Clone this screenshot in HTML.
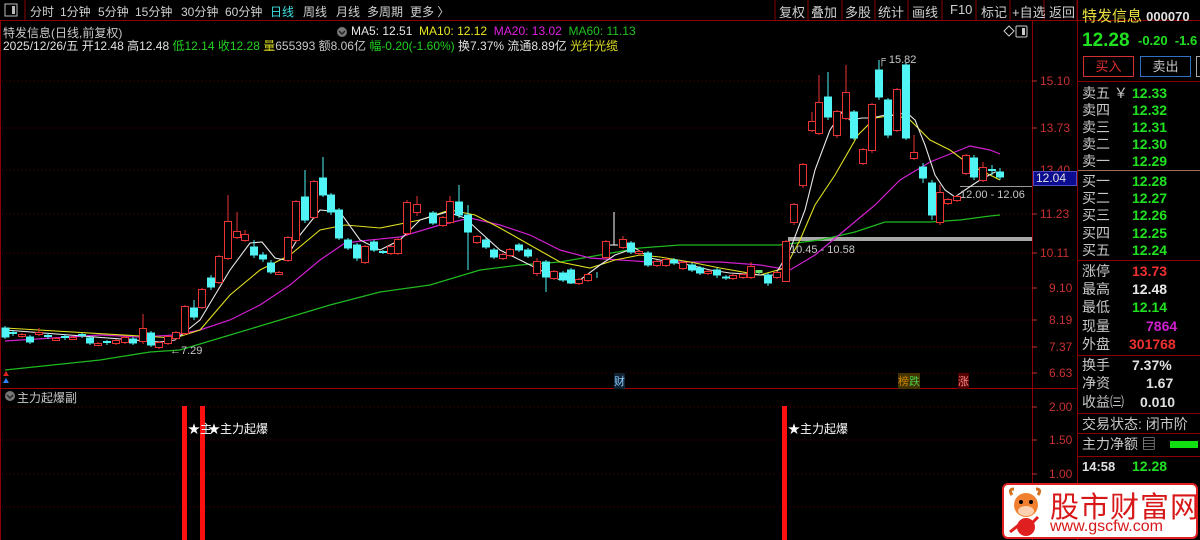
<!DOCTYPE html>
<html><head><meta charset="utf-8">
<style>
*{margin:0;padding:0;box-sizing:border-box}
body{width:1200px;height:540px;background:#000;overflow:hidden;position:relative;font-family:"Liberation Sans","Noto Sans CJK SC",sans-serif;font-size:12px;color:#c8c8c8}
.a{position:absolute;white-space:nowrap}
.m{position:absolute;top:3px;font-size:12px;color:#d0d0d0;white-space:nowrap}
.rp{position:absolute;left:1078px;top:0;width:122px;height:540px}
.row{position:absolute;left:4px;width:118px;font-size:14px;height:18px;line-height:18px}
.row b{position:absolute;left:50px;font-weight:bold;font-family:"Liberation Sans",sans-serif;font-size:14px}
.hl{position:absolute;left:0;width:122px;height:1px;background:#8b0000}
</style></head><body>
<svg class="a" style="left:0;top:0" width="1200" height="540">
<g stroke="#8b0000">
<line x1="25" y1="0" x2="25" y2="20"/>
<line x1="775" y1="0" x2="775" y2="20"/><line x1="808" y1="0" x2="808" y2="20"/><line x1="842" y1="0" x2="842" y2="20"/><line x1="875" y1="0" x2="875" y2="20"/><line x1="908" y1="0" x2="908" y2="20"/><line x1="942" y1="0" x2="942" y2="20"/><line x1="976" y1="0" x2="976" y2="20"/><line x1="1010" y1="0" x2="1010" y2="20"/><line x1="1044" y1="0" x2="1044" y2="20"/><line x1="1077" y1="0" x2="1077" y2="20"/>
<line x1="0" y1="20.5" x2="1200" y2="20.5"/>
<line x1="1032.5" y1="20" x2="1032.5" y2="540"/>
<line x1="1077.5" y1="0" x2="1077.5" y2="540"/>
<line x1="0.5" y1="20" x2="0.5" y2="540"/>
<line x1="0" y1="388.5" x2="1077" y2="388.5" stroke="#a00000"/>
</g>
<rect x="5" y="4" width="12" height="12" fill="none" stroke="#bbb"/><rect x="12" y="6" width="3" height="8" fill="#bbb"/>
<g stroke="#5a0000" stroke-dasharray="1,3">
<line x1="2" y1="81" x2="1032" y2="81"/><line x1="2" y1="128" x2="1032" y2="128"/><line x1="2" y1="170" x2="1032" y2="170"/><line x1="2" y1="214" x2="1032" y2="214"/><line x1="2" y1="253" x2="1032" y2="253"/><line x1="2" y1="288" x2="1032" y2="288"/><line x1="2" y1="320" x2="1032" y2="320"/><line x1="2" y1="347" x2="1032" y2="347"/><line x1="2" y1="373" x2="1032" y2="373"/>
<line x1="2" y1="407" x2="1032" y2="407"/><line x1="2" y1="440" x2="1032" y2="440"/><line x1="2" y1="474" x2="1032" y2="474"/><line x1="2" y1="507" x2="1032" y2="507"/>
</g>
<g stroke="#c03030">
<line x1="1032" y1="81" x2="1037" y2="81"/><line x1="1032" y1="128" x2="1037" y2="128"/><line x1="1032" y1="214" x2="1037" y2="214"/><line x1="1032" y1="253" x2="1037" y2="253"/><line x1="1032" y1="288" x2="1037" y2="288"/><line x1="1032" y1="320" x2="1037" y2="320"/><line x1="1032" y1="347" x2="1037" y2="347"/><line x1="1032" y1="373" x2="1037" y2="373"/><line x1="1032" y1="407" x2="1037" y2="407"/><line x1="1032" y1="440" x2="1037" y2="440"/><line x1="1032" y1="474" x2="1037" y2="474"/>
</g>
<rect x="788" y="237" width="244" height="4" fill="#a8a8a8"/>
<line x1="960" y1="186.5" x2="1032" y2="186.5" stroke="#999"/>
<polyline fill="none" stroke="#1fb81f" stroke-width="1.3" points="5,370 100,360 150,352 180,350 230,335 280,320 330,305 380,292 430,285 480,270 520,265 560,262 600,255 640,248 680,245 740,245 780,245 820,240 855,232 885,222 930,222 960,220 990,216 1000,215"/>
<polyline fill="none" stroke="#d020d0" stroke-width="1.2" points="5,341 100,335 140,337 175,335 200,330 230,320 260,305 290,285 320,260 345,243 370,240 400,237 440,225 470,218 500,225 530,235 560,250 590,258 620,260 650,262 680,262 720,262 760,265 790,270 815,255 845,230 875,205 900,180 930,162 960,150 970,146 990,150 1000,154"/>
<polyline fill="none" stroke="#e0e020" stroke-width="1.1" points="5,328 140,336 175,338 200,330 230,295 260,270 290,255 320,230 345,225 380,228 420,220 450,210 475,215 500,228 530,245 560,262 590,268 615,260 640,255 660,257 690,262 720,268 760,275 785,268 800,240 815,205 835,175 858,135 875,118 895,115 910,120 930,140 950,150 970,165 990,175 1000,180"/>
<polyline fill="none" stroke="#e8e8e8" stroke-width="1.1" points="5,330 160,342 175,340 200,320 230,270 250,243 262,242 275,258 285,260 300,235 320,210 340,212 360,240 380,250 400,240 420,220 447,212 465,218 480,232 500,250 520,260 540,270 560,280 580,280 600,265 615,255 635,248 650,258 670,262 690,265 710,270 730,273 760,275 775,275 790,250 805,210 815,170 830,130 842,112 850,120 862,118 872,118 885,115 898,115 906,112 915,120 925,145 935,175 945,190 955,197 965,190 980,180 995,172 1000,172"/>
<g fill="none" stroke="#e83434" stroke-width="1">
<path d="M22,333v5M39,328v8M56,337v4M73,336v4M98,342v4M116,339v6M125,336v8M143,314v30M159,341v8M168,335v10M176,331v9M185,305v30M202,288v21M219,255v29M228,195v65M237,212v27M245,230v12M279,271v4M288,236v26M296,200v42M314,180v39M365,245v19M391,245v10M398,238v17M407,200v36M417,196v20M443,216v11M450,196v28M477,235v9M503,253v7M510,248v9M537,258v18M554,270v10M579,278v7M588,273v9M606,240v19M623,236v13M639,250v5M657,260v7M666,258v9M683,261v9M708,270v5M733,274v6M743,273v6M751,262v17M777,271v8M786,240v42M794,203v22M803,163v25M812,112v20M819,75v60M837,110v28M846,65v55M863,148v17M872,103v50M897,88v44M914,135v25M940,185v40M948,198v7M957,195v7M966,154v21M983,162v20"/>
<g fill="#000">
<rect x="18.5" y="334.5" width="7" height="2"/><rect x="35.5" y="332.5" width="7" height="2"/><rect x="52.5" y="338.5" width="7" height="2"/><rect x="69.5" y="337.5" width="7" height="2"/><rect x="94.5" y="343.5" width="7" height="2"/><rect x="112.5" y="340.5" width="7" height="3"/><rect x="121.5" y="337.5" width="7" height="5"/><rect x="139.5" y="328.5" width="7" height="13"/><rect x="155.5" y="342.5" width="7" height="5"/><rect x="164.5" y="336.5" width="7" height="7"/><rect x="172.5" y="332.5" width="7" height="6"/><rect x="181.5" y="306.5" width="7" height="27"/><rect x="198.5" y="289.5" width="7" height="18"/><rect x="215.5" y="256.5" width="7" height="26"/><rect x="224.5" y="221.5" width="7" height="37"/><rect x="233.5" y="231.5" width="7" height="6"/><rect x="241.5" y="234.5" width="7" height="6"/><rect x="275.5" y="272.5" width="7" height="2"/><rect x="284.5" y="237.5" width="7" height="23"/><rect x="292.5" y="201.5" width="7" height="39"/><rect x="310.5" y="181.5" width="7" height="36"/><rect x="361.5" y="246.5" width="7" height="16"/><rect x="387.5" y="246.5" width="7" height="7"/><rect x="394.5" y="239.5" width="7" height="14"/><rect x="403.5" y="202.5" width="7" height="31"/><rect x="413.5" y="204.5" width="7" height="8"/><rect x="439.5" y="217.5" width="7" height="8"/><rect x="446.5" y="201.5" width="7" height="21"/><rect x="473.5" y="236.5" width="7" height="6"/><rect x="499.5" y="254.5" width="7" height="4"/><rect x="506.5" y="249.5" width="7" height="6"/><rect x="533.5" y="261.5" width="7" height="12"/><rect x="550.5" y="271.5" width="7" height="7"/><rect x="575.5" y="279.5" width="7" height="4"/><rect x="584.5" y="274.5" width="7" height="6"/><rect x="602.5" y="241.5" width="7" height="16"/><rect x="619.5" y="239.5" width="7" height="8"/><rect x="635.5" y="251.5" width="7" height="2"/><rect x="653.5" y="261.5" width="7" height="4"/><rect x="662.5" y="259.5" width="7" height="6"/><rect x="679.5" y="262.5" width="7" height="6"/><rect x="704.5" y="271.5" width="7" height="2"/><rect x="729.5" y="275.5" width="7" height="3"/><rect x="739.5" y="274.5" width="7" height="3"/><rect x="747.5" y="266.5" width="7" height="11"/><rect x="773.5" y="272.5" width="7" height="5"/><rect x="782.5" y="241.5" width="7" height="40"/><rect x="790.5" y="204.5" width="7" height="18"/><rect x="799.5" y="164.5" width="7" height="21"/><rect x="808.5" y="121.5" width="7" height="9"/><rect x="815.5" y="102.5" width="7" height="31"/><rect x="833.5" y="111.5" width="7" height="24"/><rect x="842.5" y="92.5" width="7" height="26"/><rect x="859.5" y="149.5" width="7" height="14"/><rect x="868.5" y="104.5" width="7" height="46"/><rect x="893.5" y="89.5" width="7" height="41"/><rect x="910.5" y="152.5" width="7" height="6"/><rect x="936.5" y="192.5" width="7" height="30"/><rect x="944.5" y="199.5" width="7" height="4"/><rect x="953.5" y="196.5" width="7" height="4"/><rect x="962.5" y="155.5" width="7" height="18"/><rect x="979.5" y="167.5" width="7" height="13"/>
</g></g>
<g stroke="#50f4f4" fill="#50f4f4">
<path d="M5,326v13M13,330v6M30,335v9M48,333v6M65,334v6M82,333v5M90,336v9M107,340v5M133,337v8M151,331v16M194,300v20M211,275v15M254,240v18M263,252v10M271,260v14M305,170v53M323,157v40M331,193v22M339,208v32M348,238v12M357,243v18M374,240v12M383,250v4M433,211v14M459,185v33M468,205v65M486,238v11M494,248v11M519,243v9M528,248v10M546,260v32M563,271v11M571,268v16M597,272v6M631,241v13M648,251v16M674,258v7M692,263v9M700,266v9M717,268v10M726,275v5M759,270v4M768,273v13M828,72v48M854,110v30M879,60v40M888,98v40M906,62v78M923,163v20M932,180v40M974,155v25M992,165v10M1000,168v12"/>
<rect x="2" y="328" width="7" height="9"/><rect x="9.5" y="332.5" width="7" height="1"/><rect x="26.5" y="337" width="7" height="5"/><rect x="44.5" y="335.5" width="7" height="1"/><rect x="61.5" y="336.5" width="7" height="1"/><rect x="78.5" y="334.5" width="7" height="1"/><rect x="86.5" y="338" width="7" height="5"/><rect x="103.5" y="341.5" width="7" height="1"/><rect x="129.5" y="339" width="7" height="4"/><rect x="147.5" y="333" width="7" height="12"/><rect x="190.5" y="308" width="7" height="9"/><rect x="207.5" y="278" width="7" height="9"/><rect x="250.5" y="247" width="7" height="8"/><rect x="259.5" y="255" width="7" height="4"/><rect x="267.5" y="263" width="7" height="9"/><rect x="301.5" y="197" width="7" height="23"/><rect x="319.5" y="178" width="7" height="17"/><rect x="327.5" y="195" width="7" height="17"/><rect x="335.5" y="210" width="7" height="28"/><rect x="344.5" y="240" width="7" height="8"/><rect x="353.5" y="245" width="7" height="13"/><rect x="370.5" y="242" width="7" height="8"/><rect x="379.5" y="251.5" width="7" height="1"/><rect x="429.5" y="213" width="7" height="10"/><rect x="455.5" y="202" width="7" height="13"/><rect x="464.5" y="215" width="7" height="17"/><rect x="482.5" y="240" width="7" height="7"/><rect x="490.5" y="250" width="7" height="7"/><rect x="515.5" y="245" width="7" height="5"/><rect x="524.5" y="250" width="7" height="6"/><rect x="542.5" y="262" width="7" height="15"/><rect x="559.5" y="273" width="7" height="7"/><rect x="567.5" y="270" width="7" height="13"/><rect x="627.5" y="243" width="7" height="9"/><rect x="644.5" y="253" width="7" height="12"/><rect x="670.5" y="260" width="7" height="3"/><rect x="688.5" y="265" width="7" height="5"/><rect x="696.5" y="268" width="7" height="5"/><rect x="713.5" y="270" width="7" height="5"/><rect x="722.5" y="277" width="7" height="1"/><rect x="764.5" y="275" width="7" height="8"/><rect x="824.5" y="97" width="7" height="20"/><rect x="850.5" y="112" width="7" height="26"/><rect x="875.5" y="70" width="7" height="27"/><rect x="884.5" y="100" width="7" height="35"/><rect x="902.5" y="65" width="7" height="73"/><rect x="919.5" y="167" width="7" height="11"/><rect x="928.5" y="183" width="7" height="32"/><rect x="970.5" y="158" width="7" height="19"/><rect x="988.5" y="169.5" width="7" height="1"/><rect x="996.5" y="172" width="7" height="5"/>
</g>
<path d="M614,212v33M610,245h8" stroke="#fff"/>
<rect x="755.5" y="270" width="7" height="3" fill="#70e070"/>
<rect x="182" y="406" width="5" height="134" fill="#ff1010"/><rect x="200" y="406" width="5" height="134" fill="#ff1010"/><rect x="782" y="406" width="5" height="134" fill="#ff1010"/>
<path d="M3,376l3,-5l3,5z" fill="#e02020"/><path d="M3,383l3,-5l3,5z" fill="#3080ff"/>
<circle cx="10" cy="396" r="5" fill="#777"/>
<path d="M7,395l3,3l3,-3" stroke="#222" fill="none" stroke-width="1.4"/>
<circle cx="342" cy="32" r="5" fill="#777"/>
<path d="M339,31l3,3l3,-3" stroke="#222" fill="none" stroke-width="1.4"/>
<path d="M1004,31l5,-5l5,5l-5,5z" fill="none" stroke="#ccc"/>
<rect x="1016" y="26" width="11" height="11" fill="none" stroke="#ccc" rx="1"/><rect x="1022" y="28" width="3" height="7" fill="#ccc"/>
</svg>

<div class="m" style="left:30px">分时</div>
<div class="m" style="left:60px">1分钟</div>
<div class="m" style="left:98px">5分钟</div>
<div class="m" style="left:135px">15分钟</div>
<div class="m" style="left:181px">30分钟</div>
<div class="m" style="left:225px">60分钟</div>
<div class="m" style="left:270px;color:#40e0e0">日线</div>
<div class="m" style="left:303px">周线</div>
<div class="m" style="left:336px">月线</div>
<div class="m" style="left:367px">多周期</div>
<div class="m" style="left:410px">更多 〉</div>
<div class="a" style="left:779px;top:2px;font-size:13px;color:#d0d0d0">复权</div>
<div class="a" style="left:811px;top:2px;font-size:13px;color:#d0d0d0">叠加</div>
<div class="a" style="left:845px;top:2px;font-size:13px;color:#d0d0d0">多股</div>
<div class="a" style="left:878px;top:2px;font-size:13px;color:#d0d0d0">统计</div>
<div class="a" style="left:912px;top:2px;font-size:13px;color:#d0d0d0">画线</div>
<div class="a" style="left:950px;top:2px;font-size:13px;color:#d0d0d0">F10</div>
<div class="a" style="left:981px;top:2px;font-size:13px;color:#d0d0d0">标记</div>
<div class="a" style="left:1012px;top:2px;font-size:13px;color:#d0d0d0">+自选</div>
<div class="a" style="left:1049px;top:2px;font-size:13px;color:#d0d0d0">返回</div>

<div class="a" style="left:3px;top:24px;font-size:12px;color:#c8c8c8">特发信息(日线,前复权)</div>
<div class="a" style="left:351px;top:24px;font-size:12px"><span style="color:#e8e8e8">MA5: 12.51</span>&nbsp; <span style="color:#e8e820">MA10: 12.12</span>&nbsp; <span style="color:#e020e0">MA20: 13.02</span>&nbsp; <span style="color:#20c020">MA60: 11.13</span></div>
<div class="a" style="left:3px;top:37px;font-size:12px;color:#e0e0e0">2025/12/26/五 开12.48 高12.48 <span style="color:#20d020">低12.14 收12.28</span> <span style="color:#d8d820">量</span><span style="color:#c8c8c8">655393 额8.06亿</span> <span style="color:#20d020">幅-0.20(-1.60%)</span> 换7.37% 流通8.89亿 <span style="color:#e0e020">光纤光缆</span></div>

<div class="a" style="left:170px;top:345px;color:#c8c8c8;font-size:11px">←7.29</div>
<div class="a" style="left:878px;top:54px;color:#c8c8c8;font-size:11px">╒ 15.82</div>
<div class="a" style="left:790px;top:244px;color:#c8c8c8;font-size:11px">10.45 - 10.58</div>
<div class="a" style="left:960px;top:189px;color:#c8c8c8;font-size:11px">12.00 - 12.06</div>
<div class="a" style="left:614px;top:373px;font-size:11px;color:#8cf;background:#123">财</div>
<div class="a" style="left:898px;top:373px;font-size:11px;color:#c80;background:#430">榜<span style="color:#4c4">跌</span></div>
<div class="a" style="left:958px;top:373px;font-size:11px;color:#f88;background:#500">涨</div>
<div class="a" style="left:17px;top:389px;font-size:12px;color:#c8c8c8">主力起爆副</div>
<div class="a" style="left:188px;top:420px;font-size:12px;color:#fff">★主<span style="margin-left:-4px">★主力起爆</span></div>
<div class="a" style="left:788px;top:420px;font-size:12px;color:#fff">★主力起爆</div>

<div class="a" style="left:1040px;top:74px;color:#c83030;font-size:12px">15.10</div>
<div class="a" style="left:1040px;top:121px;color:#c83030;font-size:12px">13.73</div>
<div class="a" style="left:1040px;top:163px;color:#c83030;font-size:12px">13.40</div>
<div class="a" style="left:1033px;top:171px;width:44px;height:15px;background:#0c0c90;border:1px solid #5050c0;color:#e0e0e0;font-size:12px;padding-left:2px;line-height:13px">12.04</div>
<div class="a" style="left:1040px;top:207px;color:#c83030;font-size:12px">11.23</div>
<div class="a" style="left:1040px;top:246px;color:#c83030;font-size:12px">10.11</div>
<div class="a" style="left:1049px;top:281px;color:#c83030;font-size:12px">9.10</div>
<div class="a" style="left:1049px;top:313px;color:#c83030;font-size:12px">8.19</div>
<div class="a" style="left:1049px;top:340px;color:#c83030;font-size:12px">7.37</div>
<div class="a" style="left:1049px;top:366px;color:#c83030;font-size:12px">6.63</div>
<div class="a" style="left:1049px;top:400px;color:#c83030;font-size:12px">2.00</div>
<div class="a" style="left:1049px;top:433px;color:#c83030;font-size:12px">1.50</div>
<div class="a" style="left:1049px;top:467px;color:#c83030;font-size:12px">1.00</div>

<div class="rp">
<div class="a" style="left:4px;top:5px;font-size:15px;color:#e8e040">特发信息 <span style="color:#e0e0e0;font-size:13px;font-weight:bold">000070</span></div>
<div class="a" style="left:4px;top:30px;font-size:19px;color:#20e020;font-weight:bold">12.28</div>
<div class="a" style="left:60px;top:33px;font-size:13px;color:#20e020;font-weight:bold">-0.20&nbsp; -1.6</div>
<div class="a" style="left:5px;top:56px;width:51px;height:21px;border:1px solid #d03030;color:#e03030;font-size:13px;text-align:center;line-height:19px">买入</div>
<div class="a" style="left:62px;top:56px;width:51px;height:21px;border:1px solid #3070c0;color:#c8c8c8;font-size:13px;text-align:center;line-height:19px">卖出</div>
<div class="a" style="left:118px;top:56px;width:8px;height:21px;border:1px solid #aaa"></div>
<div class="hl" style="top:81px"></div>
<div class="row" style="top:84px">卖五 ￥<b style="color:#20e020">12.33</b></div>
<div class="row" style="top:101px">卖四<b style="color:#20e020">12.32</b></div>
<div class="row" style="top:118px">卖三<b style="color:#20e020">12.31</b></div>
<div class="row" style="top:135px">卖二<b style="color:#20e020">12.30</b></div>
<div class="row" style="top:152px">卖一<b style="color:#20e020">12.29</b></div>
<div class="hl" style="top:170px;background:#a07050"></div>
<div class="row" style="top:172px">买一<b style="color:#20e020">12.28</b></div>
<div class="row" style="top:189px">买二<b style="color:#20e020">12.27</b></div>
<div class="row" style="top:206px">买三<b style="color:#20e020">12.26</b></div>
<div class="row" style="top:224px">买四<b style="color:#20e020">12.25</b></div>
<div class="row" style="top:241px">买五<b style="color:#20e020">12.24</b></div>
<div class="hl" style="top:260px"></div>
<div class="row" style="top:262px">涨停<b style="color:#f03030">13.73</b></div>
<div class="row" style="top:280px">最高<b style="color:#e8e8e8">12.48</b></div>
<div class="row" style="top:298px">最低<b style="color:#20e020">12.14</b></div>
<div class="row" style="top:317px">现量<b style="color:#d020d0;left:64px">7864</b></div>
<div class="row" style="top:335px">外盘<b style="color:#f03030;left:47px">301768</b></div>
<div class="hl" style="top:355px"></div>
<div class="row" style="top:356px">换手<b style="color:#e0e0e0;left:50px">7.37%</b></div>
<div class="row" style="top:374px">净资<b style="color:#e0e0e0;left:64px">1.67</b></div>
<div class="row" style="top:393px">收益㈢<b style="color:#e0e0e0;left:58px">0.010</b></div>
<div class="hl" style="top:413px"></div>
<div class="row" style="top:415px">交易状态: 闭市阶</div>
<div class="hl" style="top:433px"></div>
<div class="row" style="top:435px">主力净额 ▤</div>
<div class="a" style="left:92px;top:441px;width:28px;height:7px;background:#10e010"></div>
<div class="hl" style="top:456px"></div>
<div class="row" style="top:457px"><span style="color:#e0e0e0;font-weight:bold;font-size:13px">14:58</span><b style="color:#20e020">12.28</b></div>
</div>

<div class="a" style="left:1002px;top:483px;width:196px;height:56px;background:#fff;border:2px solid #e02020;border-radius:6px"></div>
<svg class="a" style="left:1006px;top:487px" width="40" height="50">
<path d="M6,8q-4,-6 2,-6M32,8q4,-6 -2,-6" stroke="#d07020" stroke-width="3" fill="none"/>
<circle cx="20" cy="18" r="12" fill="#f08030"/>
<ellipse cx="20" cy="24" rx="8" ry="5" fill="#fcd0b0"/>
<circle cx="15" cy="15" r="2" fill="#000"/><circle cx="25" cy="15" r="2" fill="#000"/>
<circle cx="20" cy="40" r="9" fill="#e02020"/>
<path d="M4,45l10,-8l6,5l12,-12" stroke="#e02020" stroke-width="3" fill="none"/>
</svg>
<div class="a" style="left:1050px;top:484px;font-size:29px;color:#d81818;letter-spacing:1px">股市财富网</div>
<div class="a" style="left:1050px;top:518px;font-size:16px;color:#d81818">www.gscfw.com</div>
</body></html>
